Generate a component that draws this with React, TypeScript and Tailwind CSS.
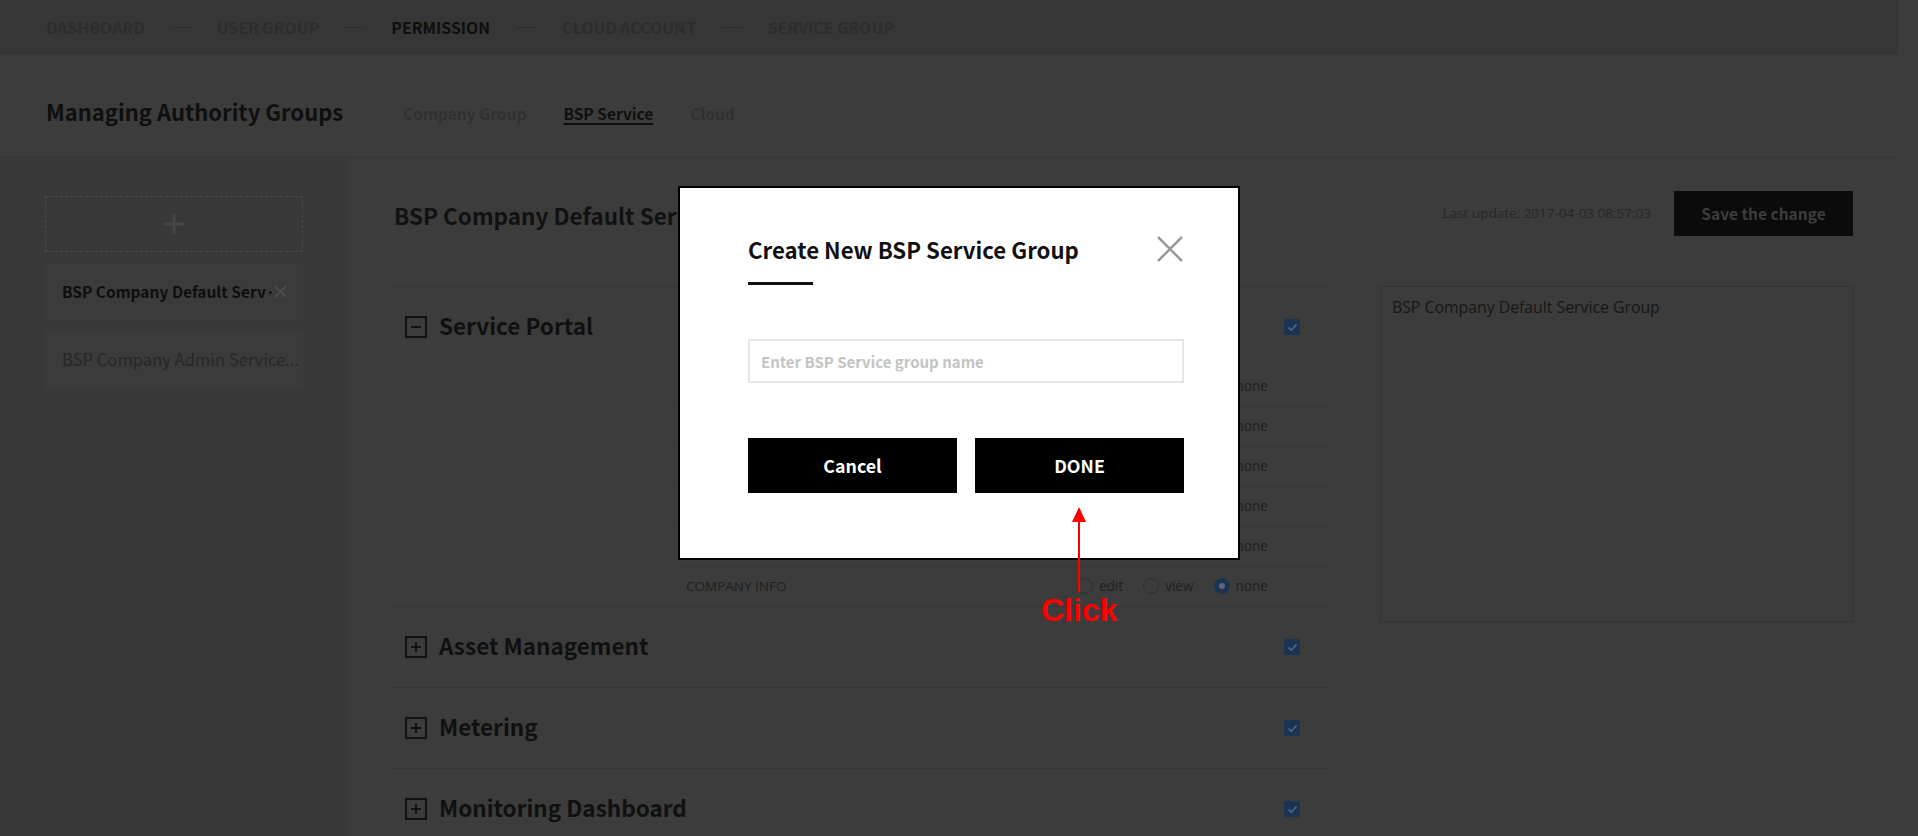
import React from 'react';

const SS = "font-['Noto_Sans_CJK_KR','Source_Sans_Pro',sans-serif]";
const OS = "font-['Open_Sans','Noto_Sans',sans-serif]";

const navItems = [
  { label: 'DASHBOARD', active: false },
  { label: 'USER GROUP', active: false },
  { label: 'PERMISSION', active: true },
  { label: 'CLOUD ACCOUNT', active: false },
  { label: 'SERVICE GROUP', active: false },
];

// rows under Service Portal (first five are hidden by the dialog)
const portalRows = ['DASHBOARD', 'NOTICE', 'Q&A', 'USER INFO', 'USER GROUP', 'COMPANY INFO'];

const Checkbox = () => (
  <div className="w-[16px] h-[16px] rounded-[2px] bg-[#1b3453] flex items-center justify-center">
    <svg width="11" height="9" viewBox="0 0 11 9" fill="none">
      <path d="M1.5 4.5 L4.2 7.2 L9.5 1.5" stroke="#56687e" strokeWidth="1.6" />
    </svg>
  </div>
);

const ToggleBox = ({ open }: { open: boolean }) => (
  <div className="w-[22px] h-[22px] border-2 border-[#121212] flex items-center justify-center relative">
    <div className="w-[10px] h-[2px] bg-[#121212]"></div>
    {!open && <div className="absolute w-[2px] h-[10px] bg-[#121212]"></div>}
  </div>
);

const Radio = ({ checked, label }: { checked: boolean; label: string }) => (
  <div className="flex items-center gap-[6px]">
    {checked ? (
      <div className="w-[16px] h-[16px] rounded-full bg-[#1b3453] flex items-center justify-center">
        <div className="w-[6px] h-[6px] rounded-full bg-[#5a6779]"></div>
      </div>
    ) : (
      <div className="w-[16px] h-[16px] rounded-full border border-[#2f2f2f]"></div>
    )}
    <span className={`${OS} text-[13.6px] text-[#1f1f1f]`}>{label}</span>
  </div>
);

const Section = ({ title, open, children }: { title: string; open: boolean; children?: React.ReactNode }) => (
  <div className="border-b border-[#353535]">
    <div className="h-[80px] flex items-center pl-[11px] pr-[32px]">
      <ToggleBox open={open} />
      <span className={`${SS} ml-[12px] mb-[2px] text-[22.5px] font-bold text-[#101010]`}>{title}</span>
      <div className="ml-auto">
        <Checkbox />
      </div>
    </div>
    {children}
  </div>
);

export default function App() {
  return (
    <div className="w-[1918px] h-[836px] overflow-hidden bg-[#3c3c3c] relative">
      <div className="w-[1898px]">
        {/* top steps */}
        <div className="h-[55px] bg-[#363636] flex items-center pl-[46px] gap-[25px]">
          {navItems.map((n, i) => (
            <React.Fragment key={n.label}>
              {i > 0 && <span className="w-[22px] h-px bg-[#2c2c2c]"></span>}
              <span className={`${SS} text-[15.9px] font-bold ${n.active ? 'text-[#0e0e0e]' : 'text-[#2d2d2d]'}`}>{n.label}</span>
            </React.Fragment>
          ))}
        </div>

        {/* page header */}
        <div className="h-[103px] border-b border-[#353535] pt-[41px] pl-[46px]">
          <div className="h-[30px] flex items-center">
            <h1 className={`${SS} text-[22px] font-bold text-[#0f0f0f]`}>Managing Authority Groups</h1>
            <div className={`${SS} flex items-center gap-[37px] ml-[60px] pt-[6px] text-[15.5px] font-bold`}>
              <span className="text-[#303030]">Company Group</span>
              <span className="text-[#0f0f0f] underline underline-offset-[3px] decoration-2">BSP Service</span>
              <span className="text-[#303030]">Cloud</span>
            </div>
          </div>
        </div>

        <div className="flex h-[678px]">
          {/* group list */}
          <div className="w-[348px] bg-[#383838] px-[45px] pt-[38px] flex flex-col gap-[11px]">
            <div className="h-[56px] border border-dashed border-[#4a4a4a] flex items-center justify-center">
              <svg width="20" height="20" viewBox="0 0 20 20">
                <rect x="8.5" y="0" width="3" height="20" fill="#474747" />
                <rect x="0" y="8.5" width="20" height="3" fill="#474747" />
              </svg>
            </div>
            <div className="h-[57px] bg-[#3b3b3b] relative flex items-center pl-[17px]">
              <span className={`${SS} text-[15.5px] font-bold text-[#0e0e0e] w-[222px] overflow-hidden whitespace-nowrap`}>BSP Company Default Serv···</span>
              <svg className="absolute left-[229px] top-[22px]" width="13" height="13" viewBox="0 0 13 13">
                <path d="M1 1 L12 12 M12 1 L1 12" stroke="#4d4d4d" strokeWidth="2" />
              </svg>
            </div>
            <div className="h-[57px] bg-[#3b3b3b] flex items-center pl-[17px]">
              <span className={`${SS} text-[16.6px] text-[#272727] whitespace-nowrap`}>BSP Company Admin Service...</span>
            </div>
          </div>

          {/* detail */}
          <div className="flex-1 pl-[46px] pr-[45px] pt-[33px]">
            <div className="h-[45px] flex items-center">
              <h2 className={`${SS} text-[22.5px] font-bold text-[#111] pt-[4px]`}>BSP Company Default Service Group</h2>
              <span className={`${OS} ml-auto text-[13.5px] text-[#262626]`}>Last update: 2017-04-03 08:57:03</span>
              <button className={`${SS} ml-[23px] w-[179px] h-[45px] bg-[#0b0b0b] text-[15.5px] font-bold text-[#3d3d3d]`}>Save the change</button>
            </div>

            <div className="mt-[50px] flex gap-[48px]">
              <div className="flex-1 border-t border-[#353535]">
                <Section title="Service Portal" open={true}>
                  <div className="ml-[283px]">
                    {portalRows.map((r, i) => (
                      <div
                        key={r}
                        className={`flex items-center pl-[9px] pr-[64px] ${i < portalRows.length - 1 ? 'h-[40px] border-b border-[#353535]' : 'h-[39px]'}`}
                      >
                        <span className={`${OS} text-[13.5px] text-[#1f1f1f]`}>{r}</span>
                        <div className="ml-auto flex items-center gap-[20px]">
                          <Radio checked={false} label="edit" />
                          <Radio checked={false} label="view" />
                          <Radio checked={true} label="none" />
                        </div>
                      </div>
                    ))}
                  </div>
                </Section>
                <Section title="Asset Management" open={false} />
                <Section title="Metering" open={false} />
                <Section title="Monitoring Dashboard" open={false} />
              </div>
              <div className="w-[473px] h-[336px] border border-[#333] pl-[11px] pt-[9px]">
                <p className={`${OS} text-[15.8px] text-[#161616]`}>BSP Company Default Service Group</p>
              </div>
            </div>
          </div>
        </div>
      </div>

      {/* dialog */}
      <div className="absolute left-[678px] top-[186px] w-[562px] h-[374px] bg-white border-2 border-black pl-[68px] pr-[54px] pt-[46px]">
        <div className="flex items-center justify-between">
          <h3 className={`${SS} text-[22.2px] leading-[30px] font-bold text-[#111]`}>Create New BSP Service Group</h3>
          <svg width="28" height="28" viewBox="0 0 28 28">
            <path d="M2 2 L26 26 M26 2 L2 26" stroke="#9a9a9a" strokeWidth="2.5" />
          </svg>
        </div>
        <div className="mt-[18px] w-[65px] h-[3px] bg-[#111]"></div>
        <input
          className={`${SS} mt-[54px] w-full h-[44px] border-2 border-[#e6e6e6] pl-[11px] text-[15px] font-bold outline-none placeholder:text-[#c3c3c3]`}
          placeholder="Enter BSP Service group name"
        />
        <div className="mt-[55px] flex gap-[18px]">
          <button className={`${SS} flex-1 h-[55px] bg-black text-white text-[17.8px] font-bold`}>Cancel</button>
          <button className={`${SS} flex-1 h-[55px] bg-black text-white text-[17.8px] font-bold`}>DONE</button>
        </div>
      </div>

      {/* annotation */}
      <svg className="absolute left-[1069px] top-[506px]" width="20" height="86" viewBox="0 0 20 86">
        <polygon points="10,1 3,16 17,16" fill="#ff0000" />
        <rect x="9" y="14" width="2" height="72" fill="#ff0000" />
      </svg>
      <span className="absolute left-[1041px] top-[586px] font-['Liberation_Sans',Arial,sans-serif] text-[32px] font-bold text-[#ff0000]">Click</span>
    </div>
  );
}
